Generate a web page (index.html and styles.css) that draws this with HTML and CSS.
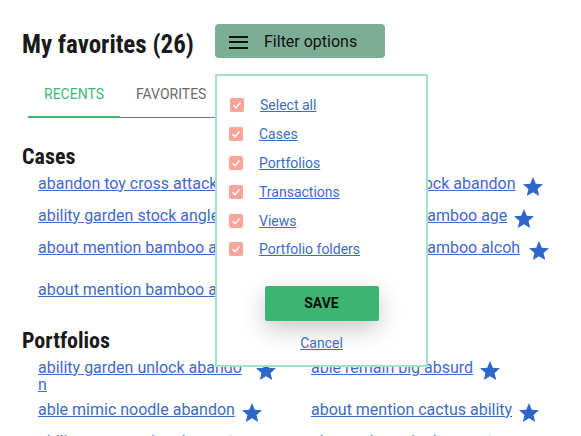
FILE: index.html
```html
<!DOCTYPE html>
<html lang="en">
<head>
    <meta charset="UTF-8">
    <meta name="viewport" content="width=device-width, initial-scale=1.0">
    <link rel="stylesheet" href="styles.css">
    <title>My favorites</title>
</head>
<body>
    <div class="page">
        <header class="top">
            <h1 class="title">My favorites (26)</h1>
            <div class="filter">
                <button class="filter-btn">
                    <svg class="menu-icon" width="19" height="13" viewBox="0 0 19 13"><rect x="0" y="0" width="19" height="2"/><rect x="0" y="5" width="19" height="2"/><rect x="0" y="11" width="19" height="2"/></svg>
                    <span>Filter options</span>
                </button>

                <!-- menu de filtro aberto -->
                <div class="filter-panel">
                    <ul class="options">
                        <li class="opt opt-all"><span class="check"><svg width="14" height="14" viewBox="0 0 14 14"><polyline points="3.5,7.3 6,9.8 10.5,4.6"/></svg></span><a href="#">Select all</a></li>
                        <li class="opt"><span class="check"><svg width="14" height="14" viewBox="0 0 14 14"><polyline points="3.5,7.3 6,9.8 10.5,4.6"/></svg></span><a href="#">Cases</a></li>
                        <li class="opt"><span class="check"><svg width="14" height="14" viewBox="0 0 14 14"><polyline points="3.5,7.3 6,9.8 10.5,4.6"/></svg></span><a href="#">Portfolios</a></li>
                        <li class="opt"><span class="check"><svg width="14" height="14" viewBox="0 0 14 14"><polyline points="3.5,7.3 6,9.8 10.5,4.6"/></svg></span><a href="#">Transactions</a></li>
                        <li class="opt"><span class="check"><svg width="14" height="14" viewBox="0 0 14 14"><polyline points="3.5,7.3 6,9.8 10.5,4.6"/></svg></span><a href="#">Views</a></li>
                        <li class="opt"><span class="check"><svg width="14" height="14" viewBox="0 0 14 14"><polyline points="3.5,7.3 6,9.8 10.5,4.6"/></svg></span><a href="#">Portfolio folders</a></li>
                    </ul>
                    <button class="save-btn">SAVE</button>
                    <div class="cancel-row"><a href="#">Cancel</a></div>
                </div>
            </div>
        </header>

        <nav class="tabs">
            <a class="tab active" href="#">RECENTS</a>
            <a class="tab" href="#">FAVORITES</a>
        </nav>

        <section class="group">
            <h2>Cases</h2>
            <div class="links">
                <div class="item"><a href="#">abandon toy cross attack</a><svg class="star" width="24" height="24" viewBox="0 0 24 24"><path d="M12 17.27L18.18 21l-1.64-7.03L22 9.24l-7.19-.61L12 2 9.19 8.63 2 9.24l5.46 4.73L5.82 21z"/></svg></div>
                <div class="item"><a href="#">ability garden stock abandon</a><svg class="star" width="24" height="24" viewBox="0 0 24 24"><path d="M12 17.27L18.18 21l-1.64-7.03L22 9.24l-7.19-.61L12 2 9.19 8.63 2 9.24l5.46 4.73L5.82 21z"/></svg></div>
                <div class="item"><a href="#">ability garden stock angle</a><svg class="star" width="24" height="24" viewBox="0 0 24 24"><path d="M12 17.27L18.18 21l-1.64-7.03L22 9.24l-7.19-.61L12 2 9.19 8.63 2 9.24l5.46 4.73L5.82 21z"/></svg></div>
                <div class="item"><a href="#">about mention bamboo age</a><svg class="star" width="24" height="24" viewBox="0 0 24 24"><path d="M12 17.27L18.18 21l-1.64-7.03L22 9.24l-7.19-.61L12 2 9.19 8.63 2 9.24l5.46 4.73L5.82 21z"/></svg></div>
                <div class="item"><a href="#">about mention bamboo able</a><svg class="star" width="24" height="24" viewBox="0 0 24 24"><path d="M12 17.27L18.18 21l-1.64-7.03L22 9.24l-7.19-.61L12 2 9.19 8.63 2 9.24l5.46 4.73L5.82 21z"/></svg></div>
                <div class="item"><a href="#">about mention bamboo alcohol</a><svg class="star" width="24" height="24" viewBox="0 0 24 24"><path d="M12 17.27L18.18 21l-1.64-7.03L22 9.24l-7.19-.61L12 2 9.19 8.63 2 9.24l5.46 4.73L5.82 21z"/></svg></div>
                <div class="item"><a href="#">about mention bamboo acid</a><svg class="star" width="24" height="24" viewBox="0 0 24 24"><path d="M12 17.27L18.18 21l-1.64-7.03L22 9.24l-7.19-.61L12 2 9.19 8.63 2 9.24l5.46 4.73L5.82 21z"/></svg></div>
            </div>
        </section>

        <section class="group">
            <h2>Portfolios</h2>
            <div class="links">
                <div class="item"><a href="#">ability garden unlock abandon</a><svg class="star" width="24" height="24" viewBox="0 0 24 24"><path d="M12 17.27L18.18 21l-1.64-7.03L22 9.24l-7.19-.61L12 2 9.19 8.63 2 9.24l5.46 4.73L5.82 21z"/></svg></div>
                <div class="item"><a href="#">able remain big absurd</a><svg class="star" width="24" height="24" viewBox="0 0 24 24"><path d="M12 17.27L18.18 21l-1.64-7.03L22 9.24l-7.19-.61L12 2 9.19 8.63 2 9.24l5.46 4.73L5.82 21z"/></svg></div>
                <div class="item"><a href="#">able mimic noodle abandon</a><svg class="star" width="24" height="24" viewBox="0 0 24 24"><path d="M12 17.27L18.18 21l-1.64-7.03L22 9.24l-7.19-.61L12 2 9.19 8.63 2 9.24l5.46 4.73L5.82 21z"/></svg></div>
                <div class="item"><a href="#">about mention cactus ability</a><svg class="star" width="24" height="24" viewBox="0 0 24 24"><path d="M12 17.27L18.18 21l-1.64-7.03L22 9.24l-7.19-.61L12 2 9.19 8.63 2 9.24l5.46 4.73L5.82 21z"/></svg></div>
                <div class="item"><a href="#">ability center point about</a><svg class="star" width="24" height="24" viewBox="0 0 24 24"><path d="M12 17.27L18.18 21l-1.64-7.03L22 9.24l-7.19-.61L12 2 9.19 8.63 2 9.24l5.46 4.73L5.82 21z"/></svg></div>
                <div class="item"><a href="#">about take wait absent</a><svg class="star" width="24" height="24" viewBox="0 0 24 24"><path d="M12 17.27L18.18 21l-1.64-7.03L22 9.24l-7.19-.61L12 2 9.19 8.63 2 9.24l5.46 4.73L5.82 21z"/></svg></div>
            </div>
        </section>
    </div>
</body>
</html>
```

FILE: styles.css
```css
html, body {
    overflow: hidden;
}

body {
    margin: 0;
    background: #fff;
    font-family: Roboto, "Liberation Sans", sans-serif;
    color: #1a1a1a;
}

.page {
    padding: 24px 22px 0;
}

/* Cabecalho com titulo e filtro */
.top {
    display: flex;
    align-items: flex-start;
}

.title {
    flex: none;
    width: 170px;
    margin: 4px 23px 0 0;
    white-space: nowrap;
    font-family: "Roboto Condensed", "Liberation Sans Narrow", "DejaVu Sans Condensed", Roboto, sans-serif;
    font-stretch: condensed;
    font-size: 25px;
    line-height: 34px;
    font-weight: 700;
    color: #1a1a1a;
}

.filter {
    position: relative;
}

.filter-btn {
    display: flex;
    align-items: center;
    width: 170px;
    height: 34px;
    padding: 0 0 0 14px;
    border: none;
    border-radius: 4px;
    background-color: #7bae94;
    color: #111;
    font-family: Roboto, sans-serif;
    font-size: 16px;
    cursor: pointer;
}

.menu-icon {
    fill: #111;
    margin: 3px 16px 0 0;
}

/* Painel de filtro */
.filter-panel {
    position: absolute;
    top: calc(100% + 16px);
    left: 0;
    z-index: 2;
    box-sizing: border-box;
    width: 213px;
    height: 293px;
    padding: 15px 12px 0;
    background-color: #fff;
    border: 2px solid #a3e2c6;
}

.options {
    list-style: none;
    margin: 0;
    padding: 0;
}

.opt {
    display: flex;
    align-items: center;
    height: 28.8px;
    font-size: 14px;
}

.opt-all {
    padding-left: 1px;
}

.check {
    display: flex;
    width: 14px;
    height: 14px;
    margin-right: 16px;
    border-radius: 2px;
    background-color: #f9a59c;
}

.check polyline {
    fill: none;
    stroke: #fff;
    stroke-width: 1.4;
}

.opt a,
.cancel-row a {
    color: #3d6cc4;
}

.save-btn {
    display: block;
    width: 114px;
    height: 35px;
    margin: 22px auto 0;
    border: none;
    border-radius: 2px;
    background-color: #3cb572;
    color: #111;
    font-family: Roboto, sans-serif;
    font-size: 14px;
    font-weight: 700;
    box-shadow: 0 8px 24px rgba(0, 0, 0, 0.22);
    cursor: pointer;
}

.cancel-row {
    margin-top: 14.5px;
    text-align: center;
    font-size: 14px;
}

/* Abas */
.tabs {
    display: inline-flex;
    margin: 10px 0 0 6px;
    border-bottom: 1px solid #777;
}

.tab {
    box-sizing: border-box;
    height: 46px;
    margin-bottom: -1px;
    padding: 0 16px;
    line-height: 44px;
    font-size: 14px;
    color: #6b6b6b;
    text-decoration: none;
    border-bottom: 2px solid transparent;
}

.tab.active {
    color: #3db878;
    border-bottom-color: #3cb371;
}

/* Listas de favoritos */
.group {
    margin-top: 25.5px;
}

.group + .group {
    margin-top: 23px;
}

.group h2 {
    margin: 0 0 5px;
    font-family: "Roboto Condensed", "Liberation Sans Narrow", "DejaVu Sans Condensed", Roboto, sans-serif;
    font-stretch: condensed;
    font-size: 22px;
    line-height: 26px;
    font-weight: 700;
}

.links {
    display: grid;
    grid-template-columns: 240px 240px;
    column-gap: 33px;
    row-gap: 8px;
    margin-left: 16px;
}

.item {
    display: flex;
    align-items: flex-start;
}

.item a {
    flex: 0 1 auto;
    font-size: 16px;
    line-height: 17px;
    color: #3d6cc4;
    word-break: break-all;
}

.star {
    flex: none;
    margin-left: 5px;
    fill: #2e67c9;
}
```
